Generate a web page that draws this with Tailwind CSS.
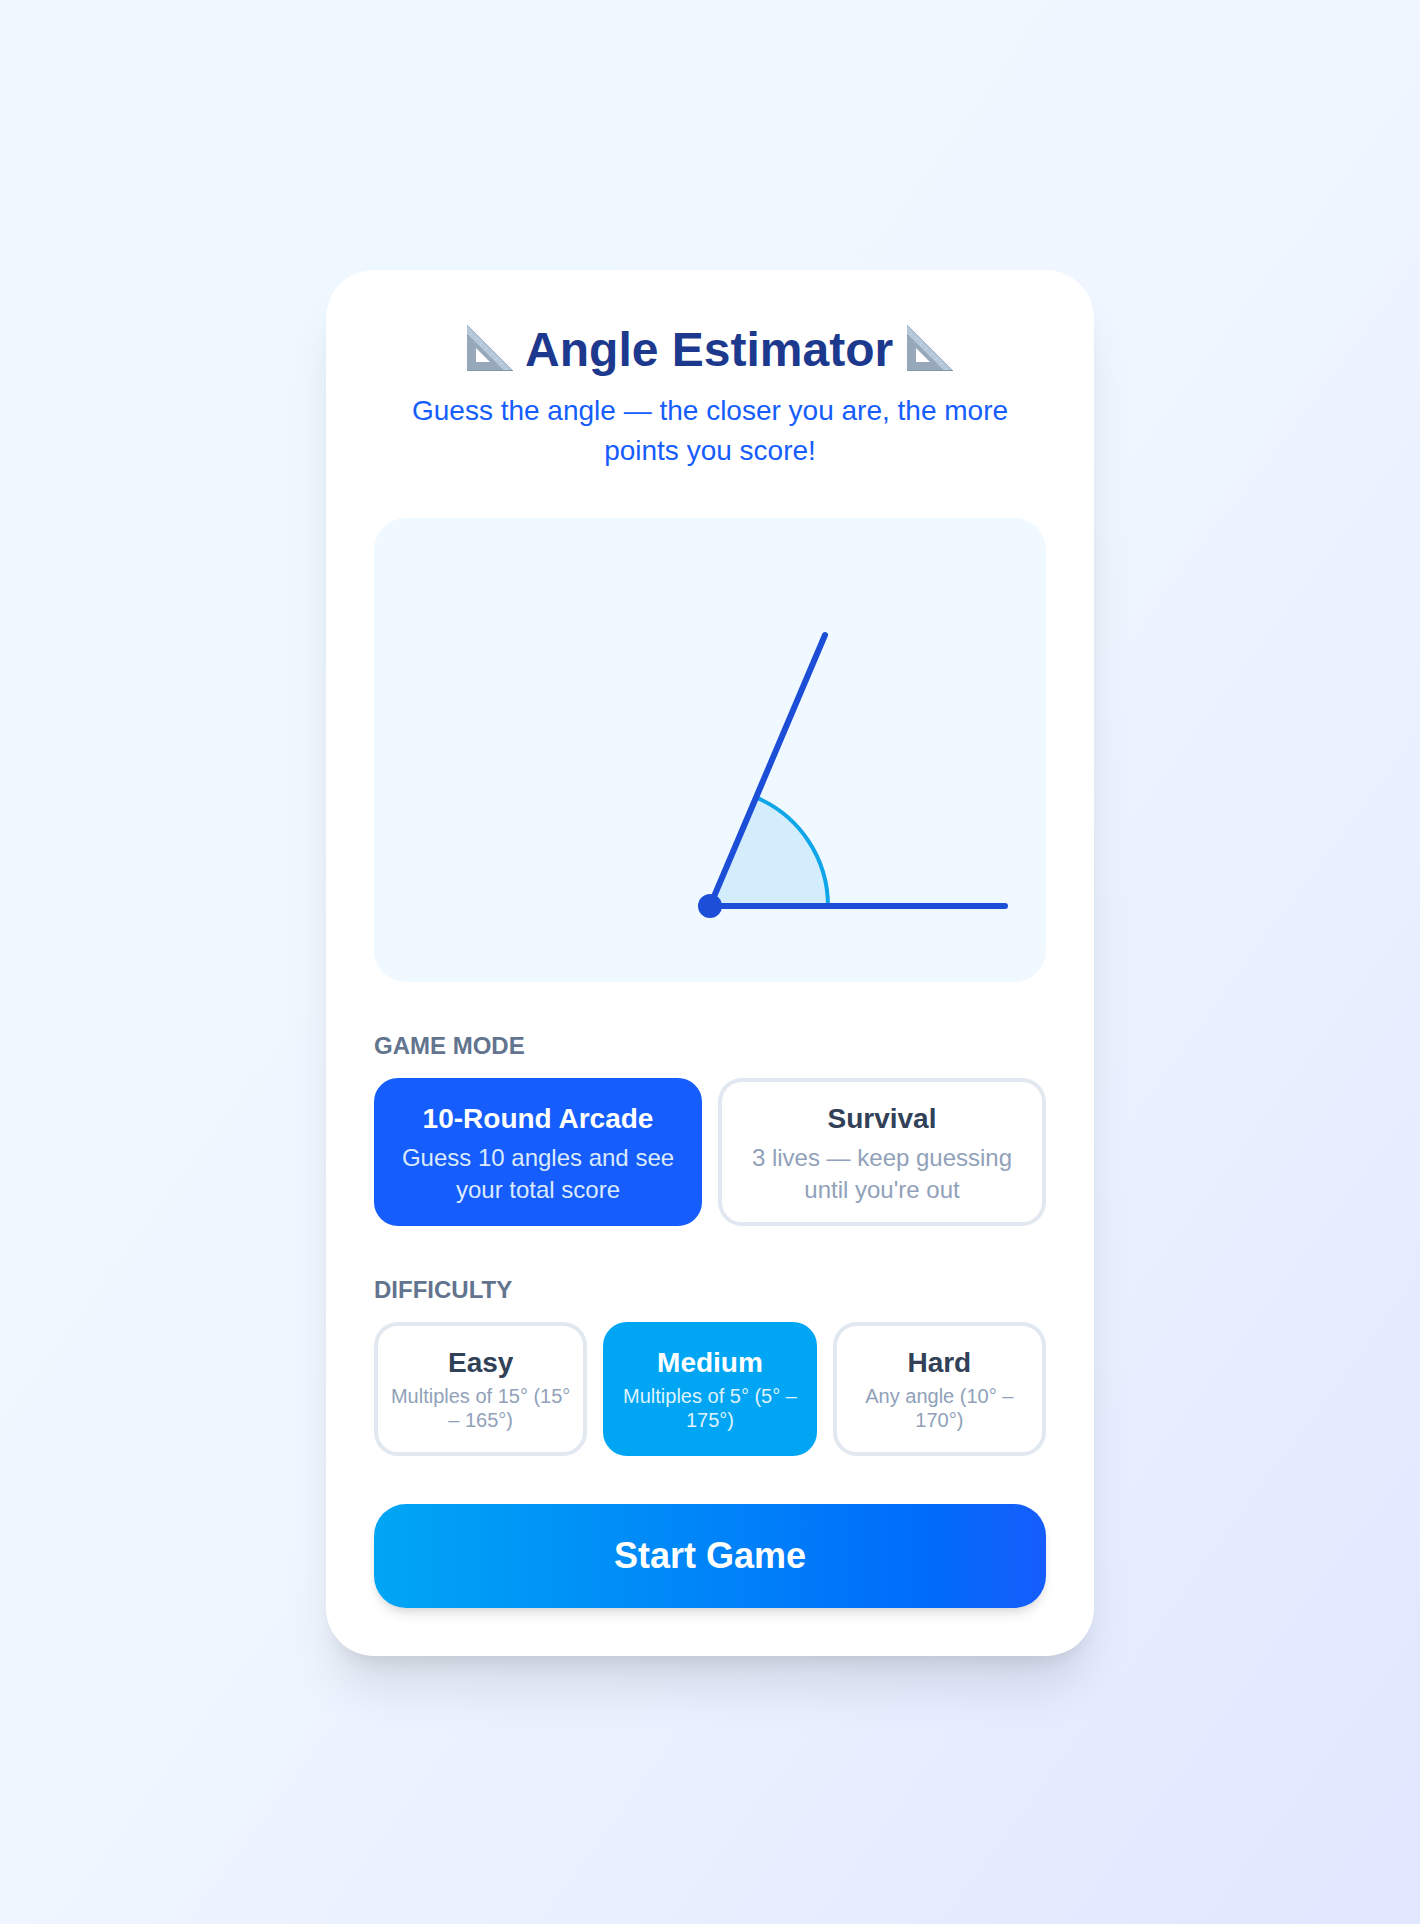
<!DOCTYPE html>
<html lang="en">
<head>
  <meta charset="UTF-8">
  <meta name="viewport" content="width=device-width, initial-scale=1.0">
  <title>Angle Estimator</title>
  <script src="https://cdn.jsdelivr.net/npm/@tailwindcss/browser@4"></script>
</head>
<body class="min-h-screen flex items-center justify-center pt-0.5 bg-gradient-to-br from-sky-50 via-blue-50 to-indigo-100 font-['Liberation_Sans',Arial,sans-serif]">
  <!-- Set square icon, used on both sides of the title -->
  <svg class="hidden" aria-hidden="true">
    <symbol id="set-square" viewBox="0 0 48 48">
      <path d="M1 1V47H47ZM10 24L24 38H10Z" fill="#97a8bb" fill-rule="evenodd" />
      <path d="M1 1V9.500L38.500 47H47Z" fill="#b5c8da" />
      <path d="M1 1L47 47" stroke="#9aacbf" stroke-width="1" fill="none" />
      <path d="M6 9l-2 2M11 14l-2 2M16 19l-2 2M21 24l-2 2M26 29l-2 2M31 34l-2 2M36 39l-2 2M41 44l-2 2" stroke="#c9d8e6" stroke-width="1" fill="none" />
      <path d="M1 46.500H47" stroke="#8696a9" stroke-width="1" />
    </symbol>
  </svg>

  <main class="w-full max-w-3xl bg-white rounded-[48px] p-12 shadow-[0_40px_50px_-10px_rgb(0_0_0/0.1),0_16px_20px_-12px_rgb(0_0_0/0.1)]">
    <header class="text-center mb-[47px]">
      <h1 class="text-5xl leading-[64px] font-bold text-blue-900">
        <svg class="inline-block size-12 align-[-6px]" role="img" aria-label="Set square"><use href="#set-square" /></svg>
        Angle Estimator
        <svg class="inline-block size-12 align-[-6px]" role="img" aria-label="Set square"><use href="#set-square" /></svg>
      </h1>
      <p class="mt-[9px] text-[28px] leading-10 text-blue-600">Guess the angle — the closer you are, the more points you score!</p>
    </header>

    <!-- Angle preview -->
    <div class="rounded-[32px] bg-sky-50 overflow-hidden mb-12">
      <svg class="block w-full" viewBox="0 0 672 464" fill="none">
        <path d="M336 388H454A118 118 0 0 0 382 279.400Z" fill="#0ea5e9" fill-opacity="0.13" />
        <path d="M454 388A118 118 0 0 0 382 279.400" stroke="#0ea5e9" stroke-width="4" />
        <path d="M336 388H631M336 388L451 117" stroke="#1d4ed8" stroke-width="6" stroke-linecap="round" />
        <circle cx="336" cy="388" r="12" fill="#1d4ed8" />
      </svg>
    </div>

    <section class="mb-12">
      <h2 class="text-2xl leading-8 font-bold uppercase text-slate-500 mb-4">Game Mode</h2>
      <div class="grid grid-cols-2 gap-4">
        <button type="button" aria-pressed="true" class="rounded-3xl border-4 border-blue-600 bg-blue-600 p-4 text-center text-white">
          <span class="block text-[28px] leading-[42px] font-bold">10-Round Arcade</span>
          <span class="block mt-0.5 text-2xl leading-8 text-blue-100">Guess 10 angles and see your total score</span>
        </button>
        <button type="button" aria-pressed="false" class="rounded-3xl border-4 border-slate-200 bg-white p-4 text-center text-slate-700">
          <span class="block text-[28px] leading-[42px] font-bold">Survival</span>
          <span class="block mt-0.5 text-2xl leading-8 text-slate-400">3 lives — keep guessing until you're out</span>
        </button>
      </div>
    </section>

    <section class="mb-12">
      <h2 class="text-2xl leading-8 font-bold uppercase text-slate-500 mb-4">Difficulty</h2>
      <div class="grid grid-cols-3 gap-4">
        <button type="button" aria-pressed="false" class="rounded-3xl border-4 border-slate-200 bg-white px-2 pt-4 pb-5 text-center text-slate-700">
          <span class="block text-[28px] leading-[42px] font-bold">Easy</span>
          <span class="block text-xl leading-6 text-slate-400">Multiples of 15° (15° – 165°)</span>
        </button>
        <button type="button" aria-pressed="true" class="rounded-3xl border-4 border-sky-500 bg-sky-500 px-2 pt-4 pb-5 text-center text-white">
          <span class="block text-[28px] leading-[42px] font-bold">Medium</span>
          <span class="block text-xl leading-6 text-sky-100">Multiples of 5° (5° – 175°)</span>
        </button>
        <button type="button" aria-pressed="false" class="rounded-3xl border-4 border-slate-200 bg-white px-2 pt-4 pb-5 text-center text-slate-700">
          <span class="block text-[28px] leading-[42px] font-bold">Hard</span>
          <span class="block text-xl leading-6 text-slate-400">Any angle (10° – 170°)</span>
        </button>
      </div>
    </section>

    <button type="button" class="w-full rounded-[32px] bg-gradient-to-r from-sky-500 to-blue-600 py-6 text-4xl leading-[56px] font-bold text-white shadow-[0_8px_12px_-2px_rgb(0_0_0/0.1),0_4px_8px_-4px_rgb(0_0_0/0.1)]">Start Game</button>
  </main>
</body>
</html>
